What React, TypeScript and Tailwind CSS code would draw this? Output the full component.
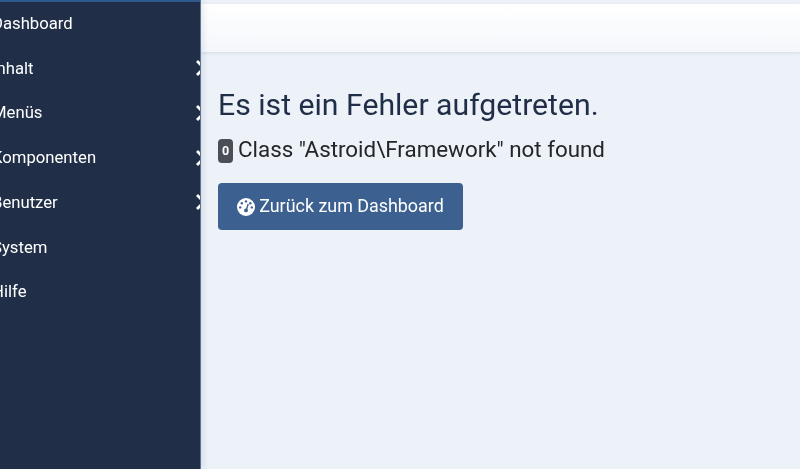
import React from "react";

const items = [
  { label: "Dashboard", arrow: false },
  { label: "Inhalt", arrow: true },
  { label: "Menüs", arrow: true },
  { label: "Komponenten", arrow: true },
  { label: "Benutzer", arrow: true },
  { label: "System", arrow: false },
  { label: "Hilfe", arrow: false },
];

function Gauge() {
  return (
    <svg viewBox="0 0 18 18" className="w-[18px] h-[18px] shrink-0" aria-hidden="true">
      <circle cx="9" cy="9" r="9" fill="#ffffff" />
      <circle cx="9" cy="3.4" r="1.2" fill="#3c6090" />
      <circle cx="4.8" cy="5.2" r="1.2" fill="#3c6090" />
      <circle cx="3.2" cy="9.4" r="1.2" fill="#3c6090" />
      <circle cx="13.3" cy="5.2" r="1.2" fill="#3c6090" />
      <circle cx="14.8" cy="9.4" r="1.2" fill="#3c6090" />
      <path d="M11.2 6 L9.6 11.2" stroke="#3c6090" strokeWidth="1.4" />
      <circle cx="9" cy="12.4" r="1.9" fill="#3c6090" />
    </svg>
  );
}

export default function App() {
  return (
    <div className="flex h-[469px] w-[800px] overflow-hidden bg-[#edf1f8] font-['Roboto',sans-serif] blur-[0.35px]">
      <aside className="z-10 w-[200px] shrink-0 overflow-hidden border-t-2 border-[#2f5a8f] bg-[#202f47] shadow-[1px_0_0_#5a7396,3px_0_6px_rgba(32,47,71,0.12)]">
        <ul className="ml-[-8px] mr-[-7px] mt-[-1px]">
          {items.map((it) => (
            <li key={it.label} className="flex h-[44.75px] items-center justify-between text-[16.7px] text-white">
              <span>{it.label}</span>
              {it.arrow && (
                <svg viewBox="0 0 12 18" className="h-[18px] w-[12px]" fill="none" stroke="#ffffff" strokeWidth="2.8" aria-hidden="true">
                  <path d="M2 2 L9 9 L2 16" />
                </svg>
              )}
            </li>
          ))}
        </ul>
      </aside>
      <main className="flex-1 pt-[4px]">
        <div className="h-[48px] bg-gradient-to-b from-white to-[#f5f7fb] shadow-[0_1px_3px_rgba(150,170,200,0.3)]" />
        <div className="pl-[18px] pt-[34px]">
          <h1 className="text-[30.2px] leading-[38px] text-[#202f47]">Es ist ein Fehler aufgetreten.</h1>
          <p className="mt-[9px] flex items-start text-[22.35px] leading-[32px] text-[#22262b]">
            <span className="mr-[5px] mt-[6px] flex h-[24px] w-[15px] items-center justify-center rounded-[4px] bg-[#4a4f57] text-[12.5px] font-bold text-white">0</span>
            Class "Astroid\Framework" not found
          </p>
          <button className="mt-[18px] flex h-[47px] w-[245px] items-center justify-center gap-[4px] rounded-[4px] bg-[#3c6090] text-[17.9px] text-white">
            <Gauge />
            Zurück zum Dashboard
          </button>
        </div>
      </main>
    </div>
  );
}
